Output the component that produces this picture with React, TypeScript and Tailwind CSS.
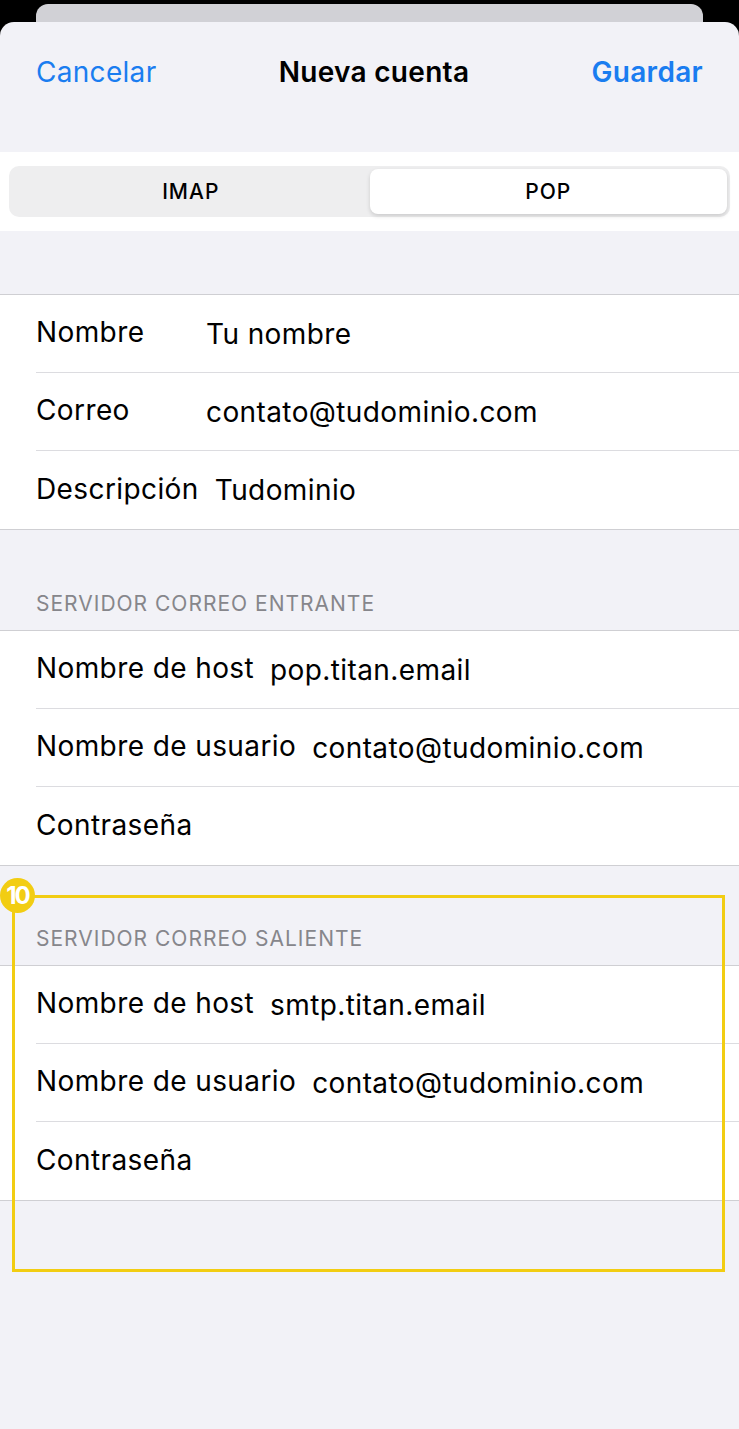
const font = { fontFamily: "Inter, 'Noto Sans', sans-serif" };

type Row = { label: string; value?: string };

function Group({ rows }: { rows: Row[] }) {
  return (
    <div className="bg-white border-y border-[#cfcfd3]">
      {rows.map((r, i) => (
        <div key={i} className="pl-[36px]">
          <div
            className={
              "h-[78px] flex items-center gap-[16px] text-[28px] text-black tracking-[0.4px] " +
              (i < rows.length - 1 ? "border-b border-[#dcdce0]" : "")
            }
          >
            <span className="min-w-[154px] -mt-[3px]">{r.label}</span>
            {r.value && <span>{r.value}</span>}
          </div>
        </div>
      ))}
    </div>
  );
}

function Header({ text, h }: { text: string; h: string }) {
  return (
    <div className={"flex items-end pl-[36px] pb-[11px] text-[21px] tracking-[1px] text-[#86868b] " + h}>
      {text}
    </div>
  );
}

export default function App() {
  return (
    <div className="bg-black min-h-[1429px] w-[739px] overflow-hidden" style={font}>
      <div className="mx-[36px] mt-[4px] h-[18px] rounded-t-[12px] bg-[#d1d1d6]" />
      <div className="relative bg-[#f2f2f7] rounded-t-[14px] min-h-[1407px]">
        <div className="h-[100px] flex items-center justify-between px-[36px] text-[28px] tracking-[0.3px]">
          <span className="text-[#1a7df0]">Cancelar</span>
          <span className="font-semibold text-black">Nueva cuenta</span>
          <span className="font-semibold text-[#1a7df0]">Guardar</span>
        </div>
        <div className="h-[30px]" />
        <div className="bg-white px-[9px] py-[14px]">
          <div className="h-[51px] rounded-[10px] bg-[#eeeeef] p-[3px] flex text-[21px] tracking-[1px] font-medium text-black">
            <div className="flex-1 flex items-center justify-center">IMAP</div>
            <div className="flex-1 flex items-center justify-center bg-white rounded-[8px] shadow-[0_2px_4px_rgba(0,0,0,0.15)]">
              POP
            </div>
          </div>
        </div>
        <div className="h-[63px]" />
        <Group
          rows={[
            { label: "Nombre", value: "Tu nombre" },
            { label: "Correo", value: "contato@tudominio.com" },
            { label: "Descripción", value: "Tudominio" },
          ]}
        />
        <Header text="SERVIDOR CORREO ENTRANTE" h="h-[100px]" />
        <Group
          rows={[
            { label: "Nombre de host", value: "pop.titan.email" },
            { label: "Nombre de usuario", value: "contato@tudominio.com" },
            { label: "Contraseña" },
          ]}
        />
        <Header text="SERVIDOR CORREO SALIENTE" h="h-[99px]" />
        <Group
          rows={[
            { label: "Nombre de host", value: "smtp.titan.email" },
            { label: "Nombre de usuario", value: "contato@tudominio.com" },
            { label: "Contraseña" },
          ]}
        />

        {/* highlight annotation */}
        <div className="absolute left-[12px] top-[873px] w-[713px] h-[377px] border-[3px] border-[#f2cd12]" />
        <div className="absolute left-0 top-[856px] w-[35px] h-[35px] rounded-full bg-[#f2cd12] flex items-center justify-center text-white font-bold text-[24px] tracking-[-2px]">
          10
        </div>
      </div>
    </div>
  );
}
